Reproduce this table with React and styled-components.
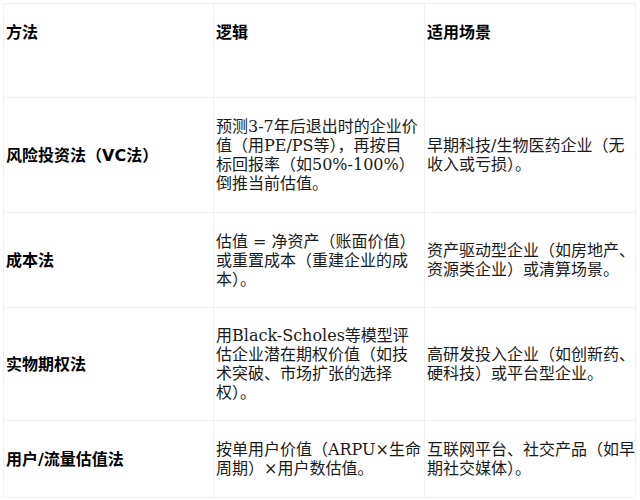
import React from "react";
import styled, { createGlobalStyle } from "styled-components";

const Global = createGlobalStyle`
  html, body { margin: 0; padding: 0; background: #fff; }
  body { font-family: "DejaVu Sans", "Noto Sans CJK SC", sans-serif; color: #111; }
`;

const Table = styled.table`
  border-collapse: collapse;
  width: 632px;
  margin: 3px;
  table-layout: fixed;
  font-size: 16px;
  line-height: 19px;
`;

const Row = styled.tr`
  height: ${(p) => p.$h}px;
`;

const Head = styled.th`
  border: 1px solid #f0f0f0;
  text-align: left;
  vertical-align: top;
  padding: 19px 2px 0 2px;
  font-weight: bold;
  font-family: "DejaVu Sans", "Noto Sans CJK SC", sans-serif;
  color: #000;
`;

const Cell = styled.td`
  border: 1px solid #f0f0f0;
  vertical-align: middle;
  padding: 0 0 0 2px;
  color: ${(p) => (p.$kind === "method" ? "#000" : "#1a1a1a")};
  font-weight: ${(p) => (p.$kind === "method" ? "bold" : "normal")};
  font-family: ${(p) =>
    p.$kind === "logic"
      ? `"DejaVu Serif", "Noto Sans CJK SC", serif`
      : `"DejaVu Sans", "Noto Sans CJK SC", sans-serif`};
`;

const Line = styled.span`
  display: block;
  white-space: nowrap;
`;

const rows = [
  {
    h: 115,
    method: "风险投资法（VC法）",
    logic: [
      "预测3-7年后退出时的企业价",
      "值（用PE/PS等），再按目",
      "标回报率（如50%-100%）",
      "倒推当前估值。",
    ],
    scene: ["早期科技/生物医药企业（无", "收入或亏损）。"],
  },
  {
    h: 95,
    method: "成本法",
    logic: ["估值 = 净资产（账面价值）", "或重置成本（重建企业的成", "本）。"],
    scene: ["资产驱动型企业（如房地产、", "资源类企业）或清算场景。"],
  },
  {
    h: 113,
    method: "实物期权法",
    logic: [
      "用Black-Scholes等模型评",
      "估企业潜在期权价值（如技",
      "术突破、市场扩张的选择",
      "权）。",
    ],
    scene: ["高研发投入企业（如创新药、", "硬科技）或平台型企业。"],
  },
  {
    h: 77,
    method: "用户/流量估值法",
    logic: ["按单用户价值（ARPU×生命", "周期）×用户数估值。"],
    scene: ["互联网平台、社交产品（如早", "期社交媒体）。"],
  },
];

export default function App() {
  return (
    <>
      <Global />
      <Table>
        <colgroup>
          <col style={{ width: 210 }} />
          <col style={{ width: 211 }} />
          <col style={{ width: 211 }} />
        </colgroup>
        <thead>
          <Row $h={94}>
            <Head>方法</Head>
            <Head>逻辑</Head>
            <Head>适用场景</Head>
          </Row>
        </thead>
        <tbody>
          {rows.map((r) => (
            <Row key={r.method} $h={r.h}>
              <Cell $kind="method">{r.method}</Cell>
              <Cell $kind="logic">
                {r.logic.map((l) => (
                  <Line key={l}>{l}</Line>
                ))}
              </Cell>
              <Cell $kind="scene">
                {r.scene.map((l) => (
                  <Line key={l}>{l}</Line>
                ))}
              </Cell>
            </Row>
          ))}
        </tbody>
      </Table>
    </>
  );
}
